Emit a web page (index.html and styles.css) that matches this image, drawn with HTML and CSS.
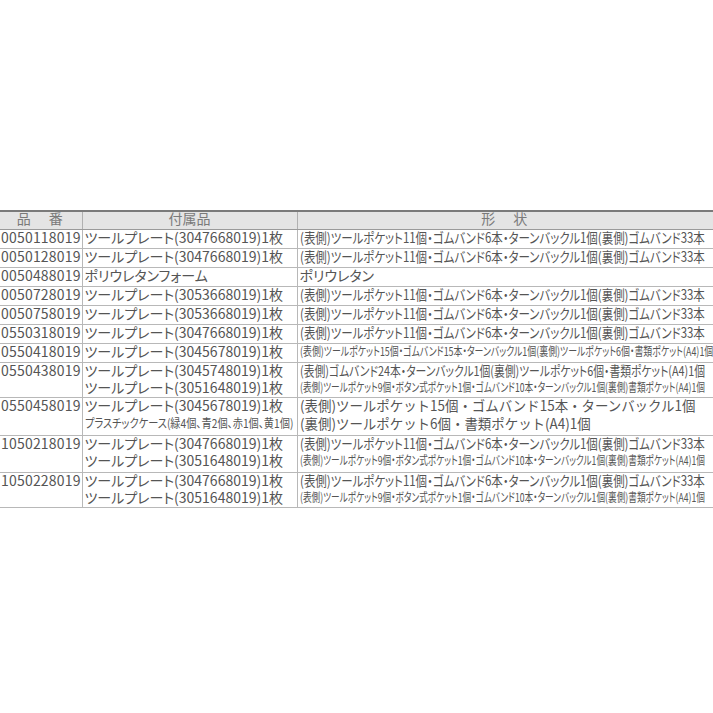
FILE: index.html
```html
<!DOCTYPE html>
<html lang="ja">
<head>
<meta charset="utf-8">
<link rel="stylesheet" href="styles.css">
</head>
<body>
<div class="page">
<table class="spec">
<colgroup><col class="c1"><col class="c2"><col class="c3"></colgroup>
<thead>
<tr><th><span class="hd">品　番</span></th><th><span class="hd h2">付属品</span></th><th><span class="hd">形　状</span></th></tr>
</thead>
<tbody>
<tr class="r1"><td class="code">0050118019</td><td><span class="ln p">ツールプレート(3047668019)1枚</span></td><td><span class="ln s3">(表側)ツールポケット11個・ゴムバンド6本・ターンバックル1個(裏側)ゴムバンド33本</span></td></tr>
<tr class="r1"><td class="code">0050128019</td><td><span class="ln p">ツールプレート(3047668019)1枚</span></td><td><span class="ln s3">(表側)ツールポケット11個・ゴムバンド6本・ターンバックル1個(裏側)ゴムバンド33本</span></td></tr>
<tr class="r1"><td class="code">0050488019</td><td><span class="ln p">ポリウレタンフォーム</span></td><td><span class="ln p">ポリウレタン</span></td></tr>
<tr class="r1"><td class="code">0050728019</td><td><span class="ln p">ツールプレート(3053668019)1枚</span></td><td><span class="ln s3">(表側)ツールポケット11個・ゴムバンド6本・ターンバックル1個(裏側)ゴムバンド33本</span></td></tr>
<tr class="r1"><td class="code">0050758019</td><td><span class="ln p">ツールプレート(3053668019)1枚</span></td><td><span class="ln s3">(表側)ツールポケット11個・ゴムバンド6本・ターンバックル1個(裏側)ゴムバンド33本</span></td></tr>
<tr class="r1"><td class="code">0550318019</td><td><span class="ln p">ツールプレート(3047668019)1枚</span></td><td><span class="ln s3">(表側)ツールポケット11個・ゴムバンド6本・ターンバックル1個(裏側)ゴムバンド33本</span></td></tr>
<tr class="r1"><td class="code">0550418019</td><td><span class="ln p">ツールプレート(3045678019)1枚</span></td><td><span class="ln xs">(表側)ツールポケット15個・ゴムバンド15本・ターンバックル1個(裏側)ツールポケット6個・書類ポケット(A4)1個</span></td></tr>
<tr class="r2"><td class="code">0550438019</td><td><span class="ln p">ツールプレート(3045748019)1枚</span><span class="ln p">ツールプレート(3051648019)1枚</span></td><td><span class="ln s8">(表側)ゴムバンド24本・ターンバックル1個(裏側)ツールポケット6個・書類ポケット(A4)1個</span><span class="ln xs2">(表側)ツールポケット9個・ボタン式ポケット1個・ゴムバンド10本・ターンバックル1個(裏側)書類ポケット(A4)1個</span></td></tr>
<tr class="r2 r9"><td class="code">0550458019</td><td><span class="ln p">ツールプレート(3045678019)1枚</span><span class="ln case">プラスチックケース(緑4個、青2個、赤1個、黄1個)</span></td><td><span class="ln big">(表側)ツールポケット15個・ゴムバンド15本・ターンバックル1個</span><span class="ln big">(裏側)ツールポケット6個・書類ポケット(A4)1個</span></td></tr>
<tr class="r2 r10"><td class="code">1050218019</td><td><span class="ln p">ツールプレート(3047668019)1枚</span><span class="ln p">ツールプレート(3051648019)1枚</span></td><td><span class="ln s3">(表側)ツールポケット11個・ゴムバンド6本・ターンバックル1個(裏側)ゴムバンド33本</span><span class="ln xs2">(表側)ツールポケット9個・ボタン式ポケット1個・ゴムバンド10本・ターンバックル1個(裏側)書類ポケット(A4)1個</span></td></tr>
<tr class="r2"><td class="code">1050228019</td><td><span class="ln p">ツールプレート(3047668019)1枚</span><span class="ln p">ツールプレート(3051648019)1枚</span></td><td><span class="ln s3">(表側)ツールポケット11個・ゴムバンド6本・ターンバックル1個(裏側)ゴムバンド33本</span><span class="ln xs2">(表側)ツールポケット9個・ボタン式ポケット1個・ゴムバンド10本・ターンバックル1個(裏側)書類ポケット(A4)1個</span></td></tr>
</tbody>
</table>
</div>
</body>
</html>
```

FILE: styles.css
```css
html, body {
  margin: 0;
  padding: 0;
  background: #ffffff;
}
.page {
  padding-top: 210px;
  width: 713px;
  height: 713px;
  box-sizing: border-box;
  overflow: hidden;
}
.spec {
  border-collapse: collapse;
  table-layout: fixed;
  width: 713px;
  font-family: "Noto Sans CJK JP", "Liberation Sans", sans-serif;
  font-size: 14px;
  color: #555;
  font-feature-settings: "palt";
}
.c1 { width: 82px; }
.c2 { width: 215px; }
.c3 { width: 416px; }
.spec th {
  background: #e4e4e4;
  border-top: 2px solid #7a7a7a;
  border-bottom: 1px solid #9a9a9a;
  border-left: 1px solid #b0b0b0;
  height: 13px;
  padding: 0 0 4px 0;
  font-weight: normal;
  color: #7a7a7a;
  line-height: 13px;
  text-align: center;
  vertical-align: top;
}
.spec th:first-child { border-left: none; }
.hd { letter-spacing: 2px; }
.h2 { letter-spacing: 0; }
.spec td {
  border-bottom: 1px solid #b8b8b8;
  border-left: 1px solid #b8b8b8;
  padding: 0 0 0 2px;
  vertical-align: top;
  line-height: 14px;
  white-space: nowrap;
  overflow: visible;
}
.spec td:first-child { border-left: none; padding-left: 1px; }
.r1 td { height: 18px; }
.r2 td { height: 34px; }
.r9 td { height: 37px; }
.r10 td { height: 36px; }
.code { letter-spacing: 0.2px; }
.ln {
  display: block;
  width: max-content;
  transform-origin: left center;
  height: 17px;
  line-height: 14px;
}
.r9 .ln { height: 18px; }
.s3 { transform: scaleX(0.819); }
.s8 { font-size: 13.5px; transform: scaleX(0.8); }
.xs { font-size: 12px; transform: scaleX(0.742); }
.xs2 { font-size: 12px; transform: scaleX(0.722); }
.case { font-size: 12px; transform: scaleX(0.85); }
.big { font-feature-settings: normal; font-size: 14px; transform: scaleX(0.96); }
```
